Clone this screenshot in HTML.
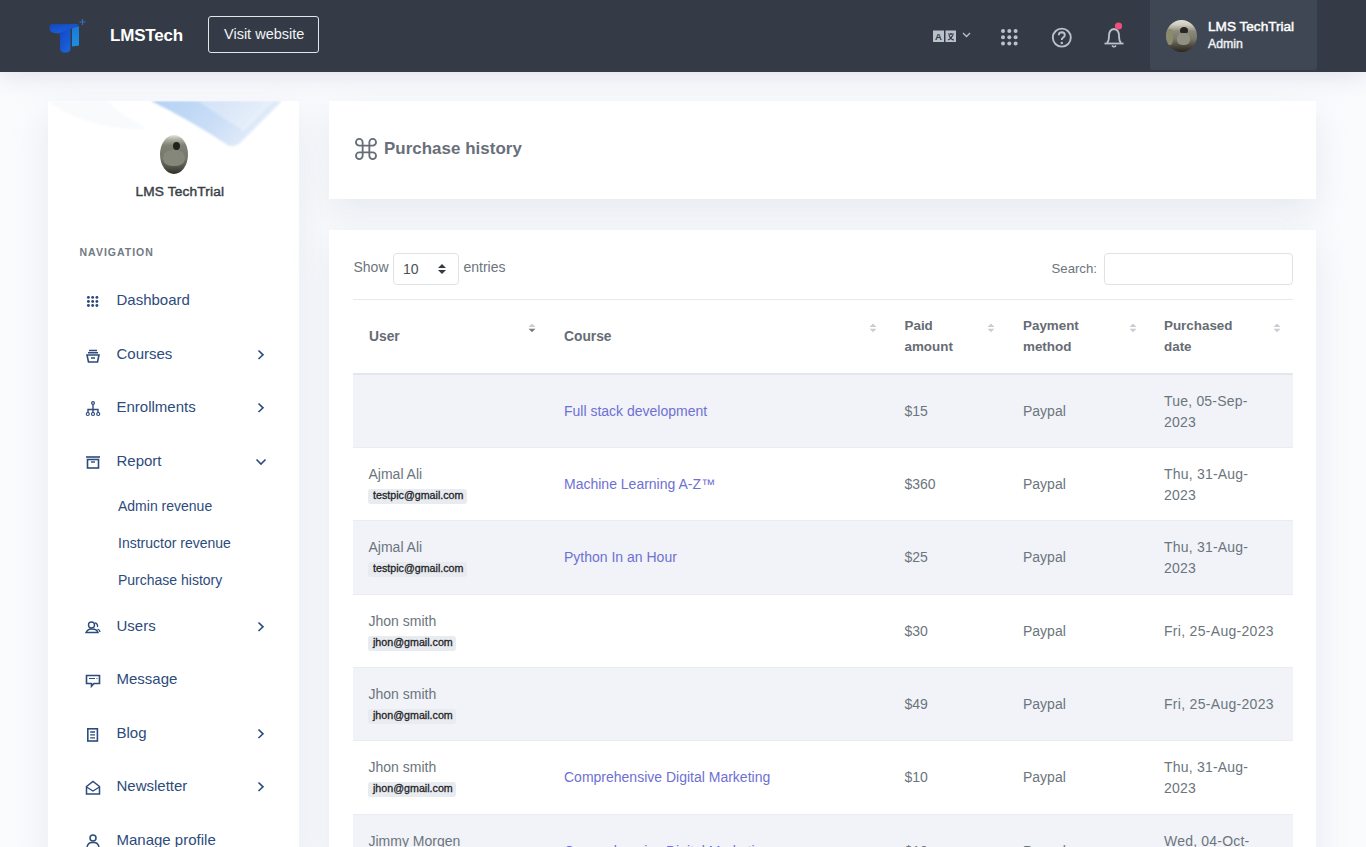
<!DOCTYPE html>
<html><head><meta charset="utf-8"><style>
*{box-sizing:border-box;margin:0;padding:0}
html,body{width:1366px;height:847px;overflow:hidden}
body{background:#fafbfd;font-family:"Liberation Sans",sans-serif;position:relative}
.a{position:absolute}
.t{position:absolute;line-height:1;white-space:nowrap}
.card{position:absolute;background:#fff;box-shadow:0 14px 34px rgba(206,213,226,0.45)}
</style></head><body>
<div class="a" style="left:0;top:0;width:1366px;height:72px;background:#343b47;box-shadow:0 0 28px rgba(185,190,210,0.55)"></div>
<svg class="a" style="left:46px;top:16px" width="44" height="40" viewBox="0 0 44 40">
<defs><linearGradient id="lg" x1="0" y1="0" x2="0.6" y2="1"><stop offset="0" stop-color="#1646c4"/><stop offset="1" stop-color="#1a62d8"/></linearGradient>
<linearGradient id="lg2" x1="0" y1="0" x2="0" y2="1"><stop offset="0" stop-color="#1c78d6"/><stop offset="1" stop-color="#1e8fe2"/></linearGradient>
<filter id="lb" x="-20%" y="-20%" width="140%" height="140%"><feGaussianBlur stdDeviation="0.55"/></filter></defs>
<g filter="url(#lb)">
<path d="M5.5 8.3 L32.5 8 L30.5 11 L24 13 L15 17.5 L8 17 Q3.5 16 3.6 12 Q3.8 8.5 5.5 8.3 Z" fill="url(#lg)"/>
<path d="M14 16.5 L24.5 12.8 L24.5 33 Q24 36.8 19.2 36.8 Q14.3 36.8 14.2 33 Z" fill="url(#lg)"/>
<path d="M26 12.5 L33 10 L33 29.5 L26 30.5 Z" fill="url(#lg2)"/>
<path d="M36.5 3 L36.5 9 M33.5 6 L39.5 6" stroke="#2f6fc8" stroke-width="1.1"/>
</g>
</svg>
<div class="t" style="left:110px;top:26.61px;font-size:17px;color:#ffffff;font-weight:bold;letter-spacing:-0.2px">LMSTech</div>
<div class="a" style="left:208px;top:16px;width:111px;height:37px;border:1px solid #e4e6ea;border-radius:3px"></div>
<div class="t" style="left:224px;top:27.23px;font-size:14.5px;color:#f2f4f7;font-weight:normal;">Visit website</div>
<svg class="a" style="left:930px;top:26px" width="45" height="22" viewBox="0 0 45 22">
<rect x="3" y="4.5" width="11" height="11.5" fill="#b9c1cb"/>
<rect x="15.5" y="4.5" width="10.5" height="11.5" fill="#b9c1cb"/>
<text x="8.5" y="14" font-size="9.5" font-weight="bold" text-anchor="middle" fill="#343b47" font-family="Liberation Sans">A</text>
<path d="M18 8 H24 M21 7 V9 M19 9 Q21 14 24 14 M23 9 Q21 13 18 14" stroke="#343b47" stroke-width="1.2" fill="none"/>
<path d="M33 7 L36.5 10.5 L40 7" stroke="#b9c1cb" stroke-width="1.3" fill="none"/>
</svg>
<svg class="a" style="left:1000px;top:28px" width="20" height="20" viewBox="0 0 20 20"><circle cx="3.0" cy="3.0" r="2" fill="#b9c1cb"/><circle cx="3.0" cy="9.3" r="2" fill="#b9c1cb"/><circle cx="3.0" cy="15.6" r="2" fill="#b9c1cb"/><circle cx="9.3" cy="3.0" r="2" fill="#b9c1cb"/><circle cx="9.3" cy="9.3" r="2" fill="#b9c1cb"/><circle cx="9.3" cy="15.6" r="2" fill="#b9c1cb"/><circle cx="15.6" cy="3.0" r="2" fill="#b9c1cb"/><circle cx="15.6" cy="9.3" r="2" fill="#b9c1cb"/><circle cx="15.6" cy="15.6" r="2" fill="#b9c1cb"/></svg>
<svg class="a" style="left:1050px;top:26px" width="24" height="24" viewBox="0 0 24 24">
<circle cx="11.8" cy="11.6" r="9" stroke="#b9c1cb" stroke-width="1.9" fill="none"/>
<path d="M8.7 9.2 Q8.8 6.3 11.8 6.3 Q14.8 6.4 14.8 9 Q14.8 10.8 12.8 11.8 Q11.8 12.4 11.8 14" stroke="#b9c1cb" stroke-width="1.9" fill="none"/>
<circle cx="11.8" cy="17" r="1.2" fill="#b9c1cb"/>
</svg>
<svg class="a" style="left:1100px;top:20px" width="30" height="30" viewBox="0 0 30 30">
<path d="M7 23 Q9 21 9 16 Q9 9.5 14 9 Q19 9.5 19 16 Q19 21 21 23" stroke="#b9c1cb" stroke-width="1.8" fill="none"/>
<path d="M4.5 23.5 H23.5" stroke="#b9c1cb" stroke-width="1.8"/>
<path d="M12 25.5 Q14 28 16 25.5" stroke="#b9c1cb" stroke-width="1.6" fill="none"/>
<circle cx="18.5" cy="6" r="3.6" fill="#ef4f78"/>
</svg>
<div class="a" style="left:1150px;top:0;width:167px;height:70px;background:#3f4754;border-radius:0 0 3px 3px"></div>
<div class="a" style="left:1166px;top:20px;width:31px;height:32px;border-radius:50%;overflow:hidden;background:linear-gradient(#e2e0d8 0%,#cfccc0 15%,#8a897a 35%,#78776a 60%,#4f4a3e 80%,#2a251e 100%)">
<div class="a" style="left:0;top:9px;width:7px;height:16px;background:#8b8a6e;border-radius:40%"></div>
<div class="a" style="left:14px;top:6.5px;width:8px;height:7px;border-radius:50%;background:#2a2520"></div>
<div class="a" style="left:11px;top:13px;width:13px;height:12px;border-radius:40%;background:#8f8f83"></div>
</div>
<div class="t" style="left:1208px;top:19.69px;font-size:13.6px;color:#ffffff;font-weight:normal;-webkit-text-stroke:0.45px #fff">LMS TechTrial</div>
<div class="t" style="left:1208px;top:37.59px;font-size:12.3px;color:#f0f2f5;font-weight:normal;-webkit-text-stroke:0.4px #f0f2f5">Admin</div>
<div class="card" style="left:48px;top:101px;width:251px;height:760px"></div>
<svg class="a" style="left:48px;top:101px" width="251" height="60" viewBox="0 0 251 60">
<defs><linearGradient id="wv" x1="0" y1="0" x2="1" y2="0.3"><stop offset="0" stop-color="#b3d1f4"/><stop offset="0.55" stop-color="#c9ddf6"/><stop offset="1" stop-color="#e6eefa"/></linearGradient>
<filter id="bl" x="-10%" y="-10%" width="120%" height="130%"><feGaussianBlur stdDeviation="0.9"/></filter></defs>
<path d="M0 0 Q40 30 100 28 Q70 12 60 0 Z" fill="#f8fafc" filter="url(#bl)"/>
<path d="M103 0 Q140 18 178 43 Q185 48 192 42 L234 0 Z" fill="url(#wv)" filter="url(#bl)"/>
<path d="M150 0 Q170 14 196 30 L226 0 Z" fill="#ffffff" opacity="0.3" filter="url(#bl)"/>
</svg>
<div class="a" style="left:160px;top:134.5px;width:28px;height:39px;border-radius:50%;overflow:hidden;background:linear-gradient(#e9e8e2 0%,#b4b4a8 10%,#7f8175 26%,#74766a 60%,#55564b 82%,#2f2c25 100%)">
<div class="a" style="left:3px;top:15px;width:22px;height:16px;border-radius:45%;background:#85877b"></div>
<div class="a" style="left:13px;top:7.5px;width:7px;height:8px;border-radius:50%;background:#24201c"></div>
</div>
<div class="t" style="left:135.5px;top:185.40px;font-size:13.7px;color:#3a3f47;font-weight:normal;-webkit-text-stroke:0.45px #3a3f47;letter-spacing:0.15px">LMS TechTrial</div>
<div class="t" style="left:79.5px;top:247.01px;font-size:10.5px;color:#727a84;font-weight:bold;letter-spacing:1px">NAVIGATION</div>
<div class="t" style="left:116.5px;top:292.10px;font-size:15px;color:#2d4b7c;font-weight:normal;">Dashboard</div>
<div class="t" style="left:116.5px;top:346.10px;font-size:15px;color:#2d4b7c;font-weight:normal;">Courses</div>
<svg class="a" style="left:255px;top:348.8px" width="12" height="12" viewBox="0 0 12 12"><path d="M3.5 1.5 L8 5.8 L3.5 10" stroke="#2d4b7c" stroke-width="1.6" fill="none"/></svg>
<div class="t" style="left:116.5px;top:399.30px;font-size:15px;color:#2d4b7c;font-weight:normal;">Enrollments</div>
<svg class="a" style="left:255px;top:402.0px" width="12" height="12" viewBox="0 0 12 12"><path d="M3.5 1.5 L8 5.8 L3.5 10" stroke="#2d4b7c" stroke-width="1.6" fill="none"/></svg>
<div class="t" style="left:116.5px;top:453.40px;font-size:15px;color:#2d4b7c;font-weight:normal;">Report</div>
<svg class="a" style="left:254px;top:456.1px" width="14" height="12" viewBox="0 0 14 12"><path d="M2.5 3.5 L7 8 L11.5 3.5" stroke="#2d4b7c" stroke-width="1.6" fill="none"/></svg>
<div class="t" style="left:116.5px;top:618.20px;font-size:15px;color:#2d4b7c;font-weight:normal;">Users</div>
<svg class="a" style="left:255px;top:620.9px" width="12" height="12" viewBox="0 0 12 12"><path d="M3.5 1.5 L8 5.8 L3.5 10" stroke="#2d4b7c" stroke-width="1.6" fill="none"/></svg>
<div class="t" style="left:116.5px;top:671.10px;font-size:15px;color:#2d4b7c;font-weight:normal;">Message</div>
<div class="t" style="left:116.5px;top:725.30px;font-size:15px;color:#2d4b7c;font-weight:normal;">Blog</div>
<svg class="a" style="left:255px;top:728.0px" width="12" height="12" viewBox="0 0 12 12"><path d="M3.5 1.5 L8 5.8 L3.5 10" stroke="#2d4b7c" stroke-width="1.6" fill="none"/></svg>
<div class="t" style="left:116.5px;top:778.30px;font-size:15px;color:#2d4b7c;font-weight:normal;">Newsletter</div>
<svg class="a" style="left:255px;top:781.0px" width="12" height="12" viewBox="0 0 12 12"><path d="M3.5 1.5 L8 5.8 L3.5 10" stroke="#2d4b7c" stroke-width="1.6" fill="none"/></svg>
<div class="t" style="left:116.5px;top:832.30px;font-size:15px;color:#2d4b7c;font-weight:normal;">Manage profile</div>
<div class="t" style="left:118px;top:498.95px;font-size:14px;color:#2d4b7c;font-weight:normal;">Admin revenue</div>
<div class="t" style="left:118px;top:535.95px;font-size:14px;color:#2d4b7c;font-weight:normal;">Instructor revenue</div>
<div class="t" style="left:118px;top:572.55px;font-size:14px;color:#2d4b7c;font-weight:normal;">Purchase history</div>
<svg class="a" style="left:85px;top:296px" width="16" height="16" viewBox="0 0 16 16"><circle cx="3.40" cy="1.40" r="1.45" fill="#2d4b7c"/><circle cx="3.40" cy="5.45" r="1.45" fill="#2d4b7c"/><circle cx="3.40" cy="9.50" r="1.45" fill="#2d4b7c"/><circle cx="7.65" cy="1.40" r="1.45" fill="#2d4b7c"/><circle cx="7.65" cy="5.45" r="1.45" fill="#2d4b7c"/><circle cx="7.65" cy="9.50" r="1.45" fill="#2d4b7c"/><circle cx="11.90" cy="1.40" r="1.45" fill="#2d4b7c"/><circle cx="11.90" cy="5.45" r="1.45" fill="#2d4b7c"/><circle cx="11.90" cy="9.50" r="1.45" fill="#2d4b7c"/></svg>
<svg class="a" style="left:85px;top:348.5px" width="16" height="16" viewBox="0 0 16 16"><path d="M2 6 H14 L12.5 13 H3.5 Z" stroke="#2d4b7c" stroke-width="1.6" fill="none"/><path d="M4 1.5 H12 M3 3.8 H13 M6 9 H10" stroke="#2d4b7c" stroke-width="1.4"/></svg>
<svg class="a" style="left:85px;top:401px" width="16" height="16" viewBox="0 0 16 16"><circle cx="8" cy="2" r="1.4" stroke="#2d4b7c" stroke-width="1.2" fill="none"/><path d="M8 3.5 V12 M3 12 V8.5 H13 V12" stroke="#2d4b7c" stroke-width="1.4" fill="none"/><circle cx="2.8" cy="13" r="1.5" stroke="#2d4b7c" stroke-width="1.2" fill="none"/><circle cx="8" cy="13" r="1.5" stroke="#2d4b7c" stroke-width="1.2" fill="none"/><circle cx="13.2" cy="13" r="1.5" stroke="#2d4b7c" stroke-width="1.2" fill="none"/></svg>
<svg class="a" style="left:85px;top:454.5px" width="16" height="16" viewBox="0 0 16 16"><path d="M1 2 H15" stroke="#2d4b7c" stroke-width="1.6"/><rect x="2.5" y="4.5" width="11" height="8.5" stroke="#2d4b7c" stroke-width="1.6" fill="none"/><path d="M6 7 H10" stroke="#2d4b7c" stroke-width="1.4"/></svg>
<svg class="a" style="left:85px;top:620.5px" width="16" height="16" viewBox="0 0 16 16"><circle cx="6.5" cy="4" r="3" stroke="#2d4b7c" stroke-width="1.4" fill="none"/><path d="M1 11.5 Q3 7.5 7 8 Q12 8 13 11.5 Z" stroke="#2d4b7c" stroke-width="1.4" fill="none"/><path d="M10 1.8 Q13 2.5 12.5 6 M12.5 8 Q15 9 15 11" stroke="#2d4b7c" stroke-width="1.3" fill="none"/></svg>
<svg class="a" style="left:85px;top:673.5px" width="16" height="16" viewBox="0 0 16 16"><path d="M1.5 1.5 H14.5 V9.5 H9 L6.5 12.2 V9.5 H1.5 Z" stroke="#2d4b7c" stroke-width="1.6" fill="none"/><path d="M4 4.5 H10 M11.5 4.5 H12.5" stroke="#2d4b7c" stroke-width="1.2"/></svg>
<svg class="a" style="left:85px;top:726.5px" width="16" height="16" viewBox="0 0 16 16"><rect x="2.8" y="1.8" width="9.6" height="12.2" stroke="#2d4b7c" stroke-width="1.6" fill="none"/><path d="M5.2 5 H10 M5.2 7.9 H10 M5.2 10.8 H10" stroke="#2d4b7c" stroke-width="1.3"/></svg>
<svg class="a" style="left:85px;top:779.5px" width="16" height="16" viewBox="0 0 16 16"><path d="M1.5 6.5 L8 1.5 L14.5 6.5 V14 H1.5 Z" stroke="#2d4b7c" stroke-width="1.5" fill="none"/><path d="M1.5 7 L8 11 L14.5 7" stroke="#2d4b7c" stroke-width="1.4" fill="none"/></svg>
<svg class="a" style="left:85px;top:834px" width="16" height="16" viewBox="0 0 16 16"><circle cx="8" cy="4" r="3" stroke="#2d4b7c" stroke-width="1.5" fill="none"/><path d="M2 13 Q3 8 8 8.5 Q13 8 14 13" stroke="#2d4b7c" stroke-width="1.5" fill="none"/></svg>
<div class="card" style="left:329px;top:101px;width:987px;height:98px"></div>
<svg class="a" style="left:354.6px;top:138.3px" width="22" height="22" viewBox="0 0 23 23">
<path d="M8 8 H15 V15 H8 Z M8 8 V4.5 A3.5 3.5 0 1 0 4.5 8 Z M15 8 H18.5 A3.5 3.5 0 1 0 15 4.5 Z M15 15 V18.5 A3.5 3.5 0 1 0 18.5 15 Z M8 15 H4.5 A3.5 3.5 0 1 0 8 18.5 Z" stroke="#666d77" stroke-width="1.9" fill="none" stroke-linejoin="round"/>
</svg>
<div class="t" style="left:384px;top:140.69px;font-size:16.9px;color:#686f79;font-weight:bold;letter-spacing:0.05px">Purchase history</div>
<div class="card" style="left:329px;top:230px;width:987px;height:700px"></div>
<div class="t" style="left:353.5px;top:259.95px;font-size:14px;color:#6c757d;font-weight:normal;">Show</div>
<div class="a" style="left:393px;top:253px;width:66px;height:32px;border:1px solid #dfe2e6;border-radius:4px;background:#fff"></div>
<div class="t" style="left:403px;top:262.05px;font-size:14px;color:#495057;font-weight:normal;">10</div>
<svg class="a" style="left:437px;top:263px" width="10" height="12" viewBox="0 0 10 12"><path d="M1 5 L5 1 L9 5 Z M1 7 L5 11 L9 7 Z" fill="#343a40"/></svg>
<div class="t" style="left:463.5px;top:259.95px;font-size:14px;color:#6c757d;font-weight:normal;">entries</div>
<div class="t" style="left:1051.5px;top:262.13px;font-size:13.2px;color:#6c757d;font-weight:normal;">Search:</div>
<div class="a" style="left:1104px;top:253px;width:189px;height:32px;border:1px solid #dfe2e6;border-radius:4px;background:#fff"></div>
<div class="a" style="left:353px;top:298.5px;width:940px;height:1px;background:#e6e9ee"></div>
<div class="t" style="left:369px;top:329.62px;font-size:13.8px;color:#666c74;font-weight:bold;">User</div>
<svg class="a" style="left:527px;top:321.5px" width="10" height="12" viewBox="0 0 10 12"><path d="M1.5 5 L5 1.5 L8.5 5 Z" fill="#c9cdd2"/><path d="M1.5 6.8 L5 10.3 L8.5 6.8 Z" fill="#777d84"/></svg>
<div class="t" style="left:564px;top:329.62px;font-size:13.8px;color:#666c74;font-weight:bold;">Course</div>
<svg class="a" style="left:867.5px;top:321.5px" width="10" height="12" viewBox="0 0 10 12"><path d="M1.5 5 L5 1.5 L8.5 5 Z" fill="#c9cdd2"/><path d="M1.5 6.8 L5 10.3 L8.5 6.8 Z" fill="#c9cdd2"/></svg>
<div class="t" style="left:904.5px;top:319.36px;font-size:13.4px;color:#666c74;font-weight:bold;">Paid</div>
<div class="t" style="left:904.5px;top:339.76px;font-size:13.4px;color:#666c74;font-weight:bold;">amount</div>
<svg class="a" style="left:986px;top:321.5px" width="10" height="12" viewBox="0 0 10 12"><path d="M1.5 5 L5 1.5 L8.5 5 Z" fill="#c9cdd2"/><path d="M1.5 6.8 L5 10.3 L8.5 6.8 Z" fill="#c9cdd2"/></svg>
<div class="t" style="left:1023px;top:319.36px;font-size:13.4px;color:#666c74;font-weight:bold;">Payment</div>
<div class="t" style="left:1023px;top:339.76px;font-size:13.4px;color:#666c74;font-weight:bold;">method</div>
<svg class="a" style="left:1127.5px;top:321.5px" width="10" height="12" viewBox="0 0 10 12"><path d="M1.5 5 L5 1.5 L8.5 5 Z" fill="#c9cdd2"/><path d="M1.5 6.8 L5 10.3 L8.5 6.8 Z" fill="#c9cdd2"/></svg>
<div class="t" style="left:1164px;top:319.36px;font-size:13.4px;color:#666c74;font-weight:bold;">Purchased</div>
<div class="t" style="left:1164px;top:339.76px;font-size:13.4px;color:#666c74;font-weight:bold;">date</div>
<svg class="a" style="left:1271.5px;top:321.5px" width="10" height="12" viewBox="0 0 10 12"><path d="M1.5 5 L5 1.5 L8.5 5 Z" fill="#c9cdd2"/><path d="M1.5 6.8 L5 10.3 L8.5 6.8 Z" fill="#c9cdd2"/></svg>
<div class="a" style="left:353px;top:373px;width:940px;height:2px;background:#e3e6eb"></div>
<div class="a" style="left:353px;top:375px;width:940px;height:73px;background:#f1f3f8;border-bottom:1px solid #e9ecf1"></div>
<div class="t" style="left:564px;top:404.15px;font-size:14px;color:#6e70d2;font-weight:normal;">Full stack development</div>
<div class="t" style="left:904.5px;top:404.35px;font-size:14px;color:#6c757d;font-weight:normal;">$15</div>
<div class="t" style="left:1023px;top:404.35px;font-size:14px;color:#6c757d;font-weight:normal;">Paypal</div>
<div class="t" style="left:1164px;top:394.05px;font-size:14px;color:#6c757d;font-weight:normal;letter-spacing:0.2px">Tue, 05-Sep-</div>
<div class="t" style="left:1164px;top:415.05px;font-size:14px;color:#6c757d;font-weight:normal;letter-spacing:0.2px">2023</div>
<div class="a" style="left:353px;top:448px;width:940px;height:73px;background:#ffffff;border-bottom:1px solid #e9ecf1"></div>
<div class="t" style="left:368.5px;top:466.95px;font-size:14px;color:#6c757d;font-weight:normal;">Ajmal Ali</div>
<div class="a" style="left:368px;top:489.3px;width:99px;height:14.5px;background:#e8ebef;border-radius:3px"></div>
<div class="t" style="left:373px;top:490.14px;font-size:10.7px;color:#1f2328;font-weight:normal;-webkit-text-stroke:0.3px #1f2328">testpic@gmail.com</div>
<div class="t" style="left:564px;top:477.15px;font-size:14px;color:#6e70d2;font-weight:normal;">Machine Learning A-Z™</div>
<div class="t" style="left:904.5px;top:477.35px;font-size:14px;color:#6c757d;font-weight:normal;">$360</div>
<div class="t" style="left:1023px;top:477.35px;font-size:14px;color:#6c757d;font-weight:normal;">Paypal</div>
<div class="t" style="left:1164px;top:467.05px;font-size:14px;color:#6c757d;font-weight:normal;letter-spacing:0.2px">Thu, 31-Aug-</div>
<div class="t" style="left:1164px;top:488.05px;font-size:14px;color:#6c757d;font-weight:normal;letter-spacing:0.2px">2023</div>
<div class="a" style="left:353px;top:521px;width:940px;height:74px;background:#f1f3f8;border-bottom:1px solid #e9ecf1"></div>
<div class="t" style="left:368.5px;top:539.95px;font-size:14px;color:#6c757d;font-weight:normal;">Ajmal Ali</div>
<div class="a" style="left:368px;top:562.3px;width:99px;height:14.5px;background:#e8ebef;border-radius:3px"></div>
<div class="t" style="left:373px;top:563.14px;font-size:10.7px;color:#1f2328;font-weight:normal;-webkit-text-stroke:0.3px #1f2328">testpic@gmail.com</div>
<div class="t" style="left:564px;top:550.15px;font-size:14px;color:#6e70d2;font-weight:normal;">Python In an Hour</div>
<div class="t" style="left:904.5px;top:550.35px;font-size:14px;color:#6c757d;font-weight:normal;">$25</div>
<div class="t" style="left:1023px;top:550.35px;font-size:14px;color:#6c757d;font-weight:normal;">Paypal</div>
<div class="t" style="left:1164px;top:540.05px;font-size:14px;color:#6c757d;font-weight:normal;letter-spacing:0.2px">Thu, 31-Aug-</div>
<div class="t" style="left:1164px;top:561.05px;font-size:14px;color:#6c757d;font-weight:normal;letter-spacing:0.2px">2023</div>
<div class="a" style="left:353px;top:595px;width:940px;height:73px;background:#ffffff;border-bottom:1px solid #e9ecf1"></div>
<div class="t" style="left:368.5px;top:613.95px;font-size:14px;color:#6c757d;font-weight:normal;">Jhon smith</div>
<div class="a" style="left:368px;top:636.3px;width:88px;height:14.5px;background:#e8ebef;border-radius:3px"></div>
<div class="t" style="left:373px;top:637.14px;font-size:10.7px;color:#1f2328;font-weight:normal;-webkit-text-stroke:0.3px #1f2328">jhon@gmail.com</div>
<div class="t" style="left:904.5px;top:624.35px;font-size:14px;color:#6c757d;font-weight:normal;">$30</div>
<div class="t" style="left:1023px;top:624.35px;font-size:14px;color:#6c757d;font-weight:normal;">Paypal</div>
<div class="t" style="left:1164px;top:624.35px;font-size:14px;color:#6c757d;font-weight:normal;letter-spacing:0.3px">Fri, 25-Aug-2023</div>
<div class="a" style="left:353px;top:668px;width:940px;height:73px;background:#f1f3f8;border-bottom:1px solid #e9ecf1"></div>
<div class="t" style="left:368.5px;top:686.95px;font-size:14px;color:#6c757d;font-weight:normal;">Jhon smith</div>
<div class="a" style="left:368px;top:709.3px;width:88px;height:14.5px;background:#e8ebef;border-radius:3px"></div>
<div class="t" style="left:373px;top:710.14px;font-size:10.7px;color:#1f2328;font-weight:normal;-webkit-text-stroke:0.3px #1f2328">jhon@gmail.com</div>
<div class="t" style="left:904.5px;top:697.35px;font-size:14px;color:#6c757d;font-weight:normal;">$49</div>
<div class="t" style="left:1023px;top:697.35px;font-size:14px;color:#6c757d;font-weight:normal;">Paypal</div>
<div class="t" style="left:1164px;top:697.35px;font-size:14px;color:#6c757d;font-weight:normal;letter-spacing:0.3px">Fri, 25-Aug-2023</div>
<div class="a" style="left:353px;top:741px;width:940px;height:74px;background:#ffffff;border-bottom:1px solid #e9ecf1"></div>
<div class="t" style="left:368.5px;top:759.95px;font-size:14px;color:#6c757d;font-weight:normal;">Jhon smith</div>
<div class="a" style="left:368px;top:782.3px;width:88px;height:14.5px;background:#e8ebef;border-radius:3px"></div>
<div class="t" style="left:373px;top:783.14px;font-size:10.7px;color:#1f2328;font-weight:normal;-webkit-text-stroke:0.3px #1f2328">jhon@gmail.com</div>
<div class="t" style="left:564px;top:770.15px;font-size:14px;color:#6e70d2;font-weight:normal;">Comprehensive Digital Marketing</div>
<div class="t" style="left:904.5px;top:770.35px;font-size:14px;color:#6c757d;font-weight:normal;">$10</div>
<div class="t" style="left:1023px;top:770.35px;font-size:14px;color:#6c757d;font-weight:normal;">Paypal</div>
<div class="t" style="left:1164px;top:760.05px;font-size:14px;color:#6c757d;font-weight:normal;letter-spacing:0.2px">Thu, 31-Aug-</div>
<div class="t" style="left:1164px;top:781.05px;font-size:14px;color:#6c757d;font-weight:normal;letter-spacing:0.2px">2023</div>
<div class="a" style="left:353px;top:815px;width:940px;height:73px;background:#f1f3f8;border-bottom:1px solid #e9ecf1"></div>
<div class="t" style="left:368.5px;top:833.95px;font-size:14px;color:#6c757d;font-weight:normal;">Jimmy Morgen</div>
<div class="a" style="left:368px;top:856.3px;width:88px;height:14.5px;background:#e8ebef;border-radius:3px"></div>
<div class="t" style="left:373px;top:857.14px;font-size:10.7px;color:#1f2328;font-weight:normal;-webkit-text-stroke:0.3px #1f2328">jimmy@gmail.com</div>
<div class="t" style="left:564px;top:844.15px;font-size:14px;color:#6e70d2;font-weight:normal;">Comprehensive Digital Marketing</div>
<div class="t" style="left:904.5px;top:844.35px;font-size:14px;color:#6c757d;font-weight:normal;">$10</div>
<div class="t" style="left:1023px;top:844.35px;font-size:14px;color:#6c757d;font-weight:normal;">Paypal</div>
<div class="t" style="left:1164px;top:834.05px;font-size:14px;color:#6c757d;font-weight:normal;letter-spacing:0.2px">Wed, 04-Oct-</div>
<div class="t" style="left:1164px;top:855.05px;font-size:14px;color:#6c757d;font-weight:normal;letter-spacing:0.2px">2023</div>
</body></html>
